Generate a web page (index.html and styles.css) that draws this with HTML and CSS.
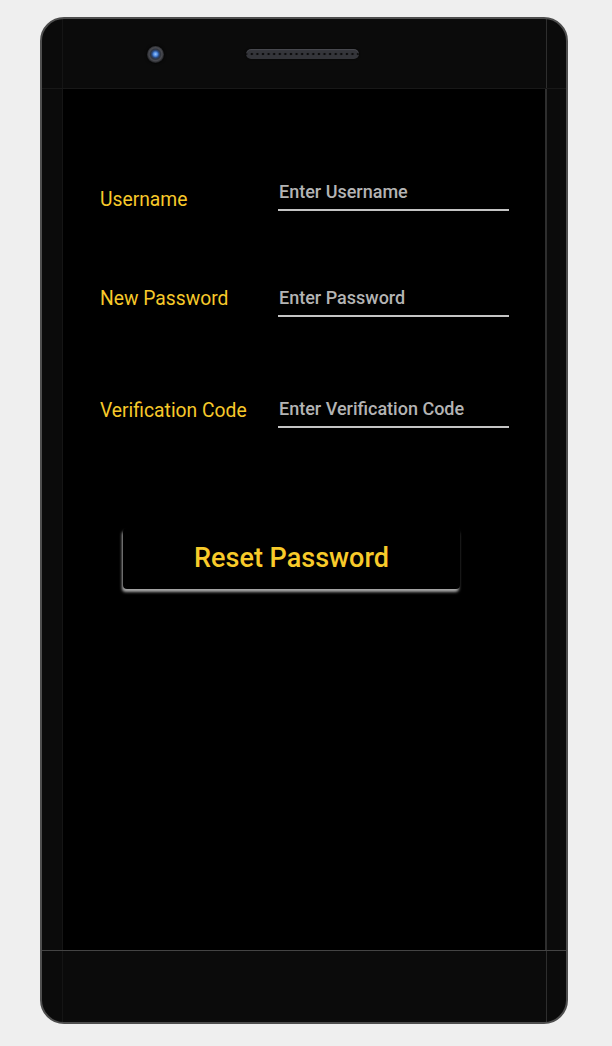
FILE: index.html
```html
<!DOCTYPE html>
<html>
<head>
<meta charset="utf-8">
<link rel="stylesheet" href="styles.css">
</head>
<body>
<div class="phone">
  <div class="bezel-top">
    <span class="camera"></span>
    <span class="speaker"></span>
  </div>
  <div class="middle">
    <div class="gutter"></div>
    <main class="screen">
      <div class="row row-1">
        <label class="label">Username</label>
        <div class="input">Enter Username</div>
      </div>
      <div class="row row-2">
        <label class="label">New Password</label>
        <div class="input">Enter Password</div>
      </div>
      <div class="row row-3">
        <label class="label">Verification Code</label>
        <div class="input">Enter Verification Code</div>
      </div>
      <button class="reset">Reset Password</button>
    </main>
    <div class="gutter gutter-right"></div>
  </div>
  <div class="bezel-bottom"></div>
</div>
</body>
</html>
```
FILE: styles.css
```css
html, body {
  margin: 0;
  padding: 0;
  background: #efefef;
  font-family: Roboto, "Liberation Sans", sans-serif;
}
body {
  padding: 17px 0 0 40px;
}
.phone {
  width: 524px;
  height: 1003px;
  border: 2px solid #4e4e4e;
  border-radius: 24px;
  background-color: #0b0b0b;
  background-image:
    linear-gradient(to right, transparent 20px, #151515 20px, #151515 21px, transparent 21px, transparent 504px, #2e2e2e 504px, #2e2e2e 505px, transparent 505px);
  display: flex;
  flex-direction: column;
  overflow: hidden;
  box-sizing: content-box;
}
.bezel-top {
  height: 69px;
  border-bottom: 1px solid #181818;
  display: flex;
  align-items: center;
  padding-left: 105px;
  box-sizing: content-box;
}
.camera {
  width: 17px;
  height: 17px;
  border-radius: 50%;
  background: radial-gradient(circle at 50% 48%, #9cc8ff 0, #4f8ae0 2px, #2a4a80 3.5px, #30343d 5px, #4a4b51 6.5px, #222326 8.5px);
  box-shadow: 0 0 3px #000;
  margin-top: 1px;
}
.speaker {
  width: 113px;
  height: 10px;
  margin-left: 82px;
  margin-top: 1px;
  border-radius: 5px;
  background-color: #34353a;
  background-image: radial-gradient(circle, #0c0c0d 1px, transparent 1.6px);
  background-size: 5.6px 10px;
  background-position: 3px 0;
  box-shadow: inset 0 1px 1px #4a4b51, 0 0 2px #000;
}
.middle {
  display: flex;
  height: 861px;
}
.gutter {
  width: 20px;
  flex: none;
}
.screen {
  width: 484px;
  flex: none;
  background: #000;
  box-sizing: border-box;
  border-left: 1px solid #151515;
  border-right: 1px solid #2e2e2e;
  padding: 93px 0 0 0;
  display: flex;
  flex-direction: column;
}
.bezel-bottom {
  flex: 1;
  border-top: 1px solid #444;
}
.row {
  display: flex;
  align-items: flex-end;
  padding-left: 37px;
}
.row-2 { margin-top: 77px; }
.row-3 { margin-top: 82px; }
.label {
  width: 178px;
  flex: none;
  color: #f7c92a;
  font-size: 19.3px;
  font-weight: 400;
  line-height: 22px;
}
.row-2 .label { padding-bottom: 7px; }
.row-3 .label { padding-bottom: 6px; }
.input {
  width: 230px;
  color: #b4b4b4;
  font-size: 18px;
  font-weight: 500;
  line-height: 20px;
  padding: 0 0 7px 1px;
  border-bottom: 2px solid #c4c4c4;
}
.reset {
  margin: 100px 0 0 60px;
  width: 337px;
  height: 61px;
  background: #000;
  border: none;
  border-radius: 4px;
  color: #f8cb2a;
  font-family: Roboto, "Liberation Sans", sans-serif;
  font-size: 27px;
  font-weight: 500;
  padding: 0 0 1px 0;
  box-shadow: -1px 3px 3px rgba(210, 210, 210, 0.8);
}
```
